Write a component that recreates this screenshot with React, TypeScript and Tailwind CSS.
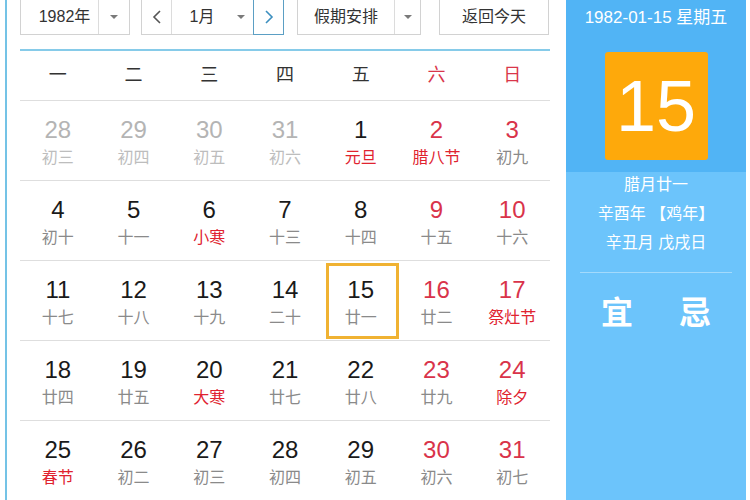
import React from "react";

type Day = { n: number; l: string; out?: boolean; rn?: boolean; rl?: boolean; sel?: boolean };

const rows: Day[][] = [
  [
    { n: 28, l: "初三", out: true },
    { n: 29, l: "初四", out: true },
    { n: 30, l: "初五", out: true },
    { n: 31, l: "初六", out: true },
    { n: 1, l: "元旦", rl: true },
    { n: 2, l: "腊八节", rn: true, rl: true },
    { n: 3, l: "初九", rn: true },
  ],
  [
    { n: 4, l: "初十" },
    { n: 5, l: "十一" },
    { n: 6, l: "小寒", rl: true },
    { n: 7, l: "十三" },
    { n: 8, l: "十四" },
    { n: 9, l: "十五", rn: true },
    { n: 10, l: "十六", rn: true },
  ],
  [
    { n: 11, l: "十七" },
    { n: 12, l: "十八" },
    { n: 13, l: "十九" },
    { n: 14, l: "二十" },
    { n: 15, l: "廿一", sel: true },
    { n: 16, l: "廿二", rn: true },
    { n: 17, l: "祭灶节", rn: true, rl: true },
  ],
  [
    { n: 18, l: "廿四" },
    { n: 19, l: "廿五" },
    { n: 20, l: "大寒", rl: true },
    { n: 21, l: "廿七" },
    { n: 22, l: "廿八" },
    { n: 23, l: "廿九", rn: true },
    { n: 24, l: "除夕", rn: true, rl: true },
  ],
  [
    { n: 25, l: "春节", rl: true },
    { n: 26, l: "初二" },
    { n: 27, l: "初三" },
    { n: 28, l: "初四" },
    { n: 29, l: "初五" },
    { n: 30, l: "初六", rn: true },
    { n: 31, l: "初七", rn: true },
  ],
];

const weekdays = ["一", "二", "三", "四", "五", "六", "日"];

const Caret = () => (
  <svg width="10" height="6" viewBox="0 0 10 6">
    <path d="M1 1 L5 5 L9 1 Z" fill="#7a7a7a" />
  </svg>
);

const Chevron = ({ dir, color }: { dir: "l" | "r"; color: string }) => (
  <svg width="10" height="16" viewBox="0 0 10 16">
    <path
      d={dir === "l" ? "M8 2 L2 8 L8 14" : "M2 2 L8 8 L2 14"}
      fill="none"
      stroke={color}
      strokeWidth="1.6"
    />
  </svg>
);

export default function App() {
  const cjk = { fontFamily: '"Liberation Sans", "Noto Sans CJK SC", sans-serif' };
  const latin = { fontFamily: '"Liberation Sans", Arial, sans-serif' };
  return (
    <div className="w-[750px] h-[500px] bg-white flex overflow-hidden" style={cjk}>
      {/* left strip */}
      <div className="w-[20px] h-full flex shrink-0">
        <div className="w-[5px]" />
        <div className="w-[2px] h-full bg-[#74c3e6]" />
      </div>

      {/* main calendar */}
      <div className="w-[530px] shrink-0 flex flex-col">
        {/* toolbar */}
        <div className="h-[50px] shrink-0 flex items-start -mt-px">
          <div className="w-[110px] h-[36px] border border-[#d2d2d2] flex">
            <div className="w-[77px] pl-[10px] flex items-center justify-center text-[16px] text-[#333]">1982年</div>
            <div className="flex-1 border-l border-[#dcdcdc] flex items-center justify-center">
              <Caret />
            </div>
          </div>
          <div className="w-[143px] h-[36px] ml-[11px] border border-[#d2d2d2] flex">
            <div className="w-[30px] border-r border-[#dcdcdc] flex items-center justify-center">
              <Chevron dir="l" color="#555" />
            </div>
            <div className="w-[56px] pl-[4px] flex items-center justify-center text-[16px] text-[#333]">1月</div>
            <div className="w-[25px] flex items-center justify-center">
              <Caret />
            </div>
            <div className="flex-1 border border-[#5b9fc4] -my-px -mr-px flex items-center justify-center">
              <Chevron dir="r" color="#3d8fbf" />
            </div>
          </div>
          <div className="w-[124px] h-[36px] ml-[13px] border border-[#d2d2d2] flex">
            <div className="w-[96px] flex items-center justify-center text-[16px] text-[#333]">假期安排</div>
            <div className="flex-1 border-l border-[#dcdcdc] flex items-center justify-center">
              <Caret />
            </div>
          </div>
          <div className="w-[110px] h-[36px] ml-[18px] border border-[#d2d2d2] flex items-center justify-center text-[16px] text-[#333]">
            返回今天
          </div>
        </div>
        <div className="h-[2px] shrink-0 bg-[#86cbe9]" />

        {/* weekday header */}
        <div className="h-[50px] shrink-0 grid grid-cols-7 border-b border-[#dedede]">
          {weekdays.map((w, i) => (
            <div
              key={w}
              className={`flex items-center justify-center text-[18px] ${i >= 5 ? "text-[#d9364a]" : "text-[#333]"}`}
            >
              {w}
            </div>
          ))}
        </div>

        {/* rows */}
        {rows.map((row, ri) => (
          <div key={ri} className="h-[80px] grid grid-cols-7 border-b border-[#dedede] shrink-0">
            {row.map((d, ci) => (
              <div key={ci} className="relative flex flex-col items-center pt-[14px]">
                {d.sel && (
                  <div className="absolute left-[3px] right-0 top-[2px] bottom-[1px] border-[3px] border-[#f0b232]" />
                )}
                <div
                  className={`text-[24px] leading-[30px] ${
                    d.out ? "text-[#b4b4b4]" : d.rn ? "text-[#d9334a]" : "text-[#1a1a1a]"
                  }`}
                  style={latin}
                >
                  {d.n}
                </div>
                <div
                  className={`text-[16px] leading-[26px] ${
                    d.out ? "text-[#bdbdbd]" : d.rl ? "text-[#e0232f]" : "text-[#8a8a8a]"
                  }`}
                >
                  {d.l}
                </div>
              </div>
            ))}
          </div>
        ))}
      </div>

      {/* right panel */}
      <div className="w-[16px] shrink-0" />
      <div className="w-[180px] h-full shrink-0 flex flex-col bg-[#6cc4fb]">
        <div className="h-[172px] shrink-0 bg-[#51b4f5] flex flex-col items-center">
          <div className="mt-[7px] text-[17px] leading-[22px] text-white">1982-01-15 星期五</div>
          <div
            className="mt-[23px] w-[103px] h-[108px] bg-[#fea90b] rounded-[3px] flex items-center justify-center text-white text-[72px]"
            style={latin}
          >
            15
          </div>
        </div>
        <div className="flex flex-col items-center text-white text-[16px] leading-[29px] -mt-[2px]">
          <div>腊月廿一</div>
          <div>辛酉年 【鸡年】</div>
          <div>辛丑月 戊戌日</div>
        </div>
        <div className="mx-[14px] mt-[15px] h-px bg-[#a3dafc]" />
        <div className="flex justify-center gap-[46px] mt-[20px] text-[32px] leading-[40px] text-white font-bold">
          <span>宜</span>
          <span>忌</span>
        </div>
      </div>
      <div className="flex-1" />
    </div>
  );
}
